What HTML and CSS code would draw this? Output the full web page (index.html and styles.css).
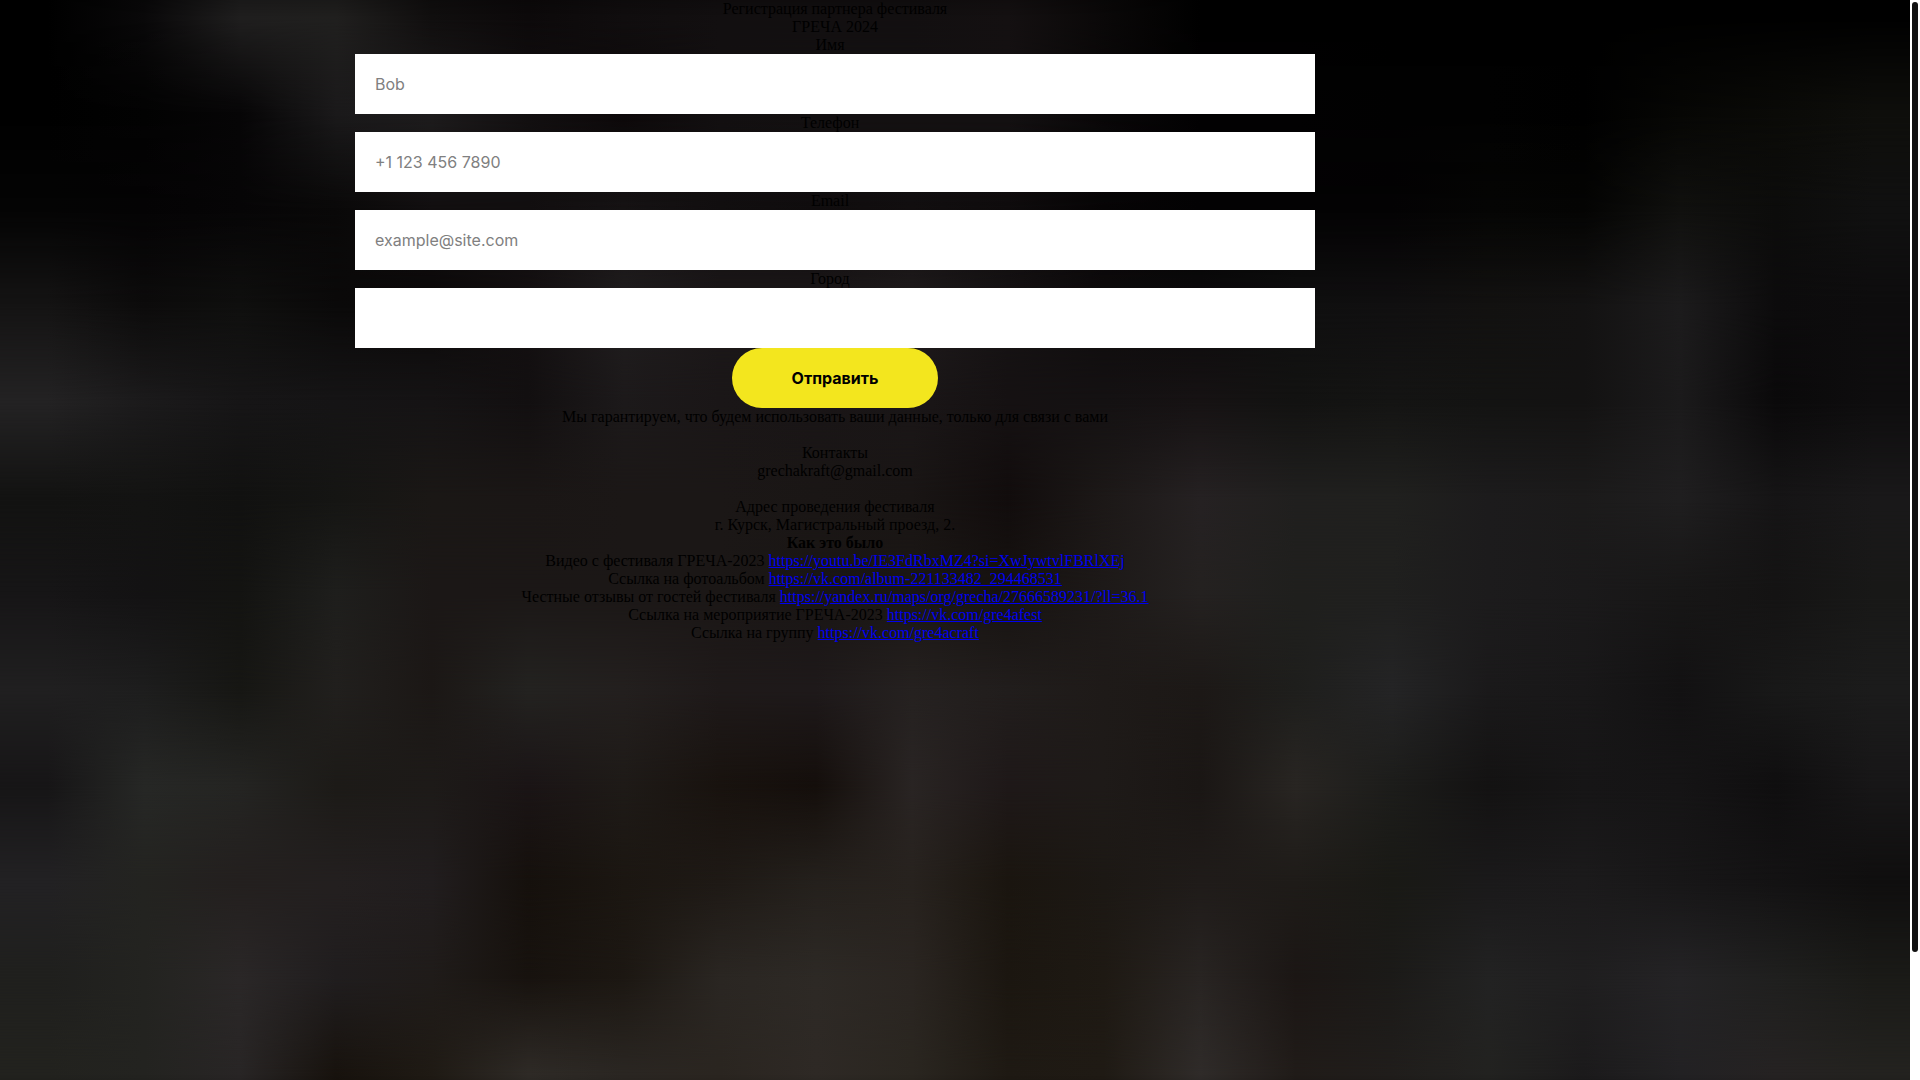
FILE: index.html
```html
<!DOCTYPE html>
<html lang="ru">
<head>
  <meta charset="UTF-8">
  <meta name="viewport" content="width=device-width, initial-scale=1.0">
  <title>Регистрация партнера фестиваля ГРЕЧА 2024</title>
  <link rel="stylesheet" href="styles.css">
</head>
<body>
  <div class="backdrop">
    <div class="band"></div>
    <div class="band"></div>
    <div class="band"></div>
    <div class="band"></div>
    <div class="band"></div>
    <div class="band"></div>
    <div class="band"></div>
    <div class="band"></div>
    <div class="band"></div>
    <div class="band"></div>
    <div class="band"></div>
    <div class="band"></div>
  </div>

  <div class="page">
    <main class="content">
      <h1 class="title">Регистрация партнера фестиваля<br>ГРЕЧА 2024</h1>

      <form class="form">
        <label class="form-label" for="name">Имя</label>
        <input class="form-input" type="text" id="name" name="name" placeholder="Bob">
        <label class="form-label" for="phone">Телефон</label>
        <input class="form-input" type="tel" id="phone" name="phone" placeholder="+1 123 456 7890">
        <label class="form-label" for="email">Email</label>
        <input class="form-input" type="email" id="email" name="email" placeholder="example@site.com">
        <label class="form-label" for="city">Город</label>
        <input class="form-input" type="text" id="city" name="city">
        <button class="form-submit" type="submit">Отправить</button>
      </form>

      <p class="note">Мы гарантируем, что будем использовать ваши данные, только для связи с вами</p>
      <p class="note">Контакты<br>grechakraft@gmail.com</p>
      <p>Адрес проведения фестиваля<br>г. Курск, Магистральный проезд, 2.</p>

      <strong>Как это было</strong>
      <ul class="links">
        <li>Видео с фестиваля ГРЕЧА-2023 <a href="https://youtu.be/IE3FdRbxMZ4?si=XwJywtvlFBRlXEj">https://youtu.be/IE3FdRbxMZ4?si=XwJywtvlFBRlXEj</a></li>
        <li>Ссылка на фотоальбом <a href="https://vk.com/album-221133482_294468531">https://vk.com/album-221133482_294468531</a></li>
        <li>Честные отзывы от гостей фестиваля <a href="https://yandex.ru/maps/org/grecha/27666589231/?ll=36.1">https://yandex.ru/maps/org/grecha/27666589231/?ll=36.1</a></li>
        <li>Ссылка на мероприятие ГРЕЧА-2023 <a href="https://vk.com/gre4afest">https://vk.com/gre4afest</a></li>
        <li>Ссылка на группу <a href="https://vk.com/gre4acraft">https://vk.com/gre4acraft</a></li>
      </ul>
    </main>
    <div class="scrollbar" aria-hidden="true">
      <div class="scrollbar-thumb"></div>
    </div>
  </div>
</body>
</html>
```

FILE: styles.css
```css
* {
  box-sizing: border-box;
}
body {
  margin: 0;
  font-family: "Liberation Serif", "Times New Roman", serif;
  font-size: 16px;
  line-height: 18px;
  color: #000;
  text-rendering: optimizeSpeed;
}

/* soft dark backdrop: overlapping bands that fade into each other */
.backdrop {
  position: absolute;
  inset: 0;
  z-index: -1;
  overflow: hidden;
  background: #000;
  isolation: isolate;
}
.band {
  --step: calc(100vh / 11.25);
  height: calc(var(--step) * 2);
  margin-bottom: calc(var(--step) * -1);
  mix-blend-mode: plus-lighter;
  -webkit-mask-image: linear-gradient(transparent, #000, transparent);
  mask-image: linear-gradient(transparent, #000, transparent);
}
.band:nth-child(1) {
  margin-top: -78px;
  background: linear-gradient(90deg, #000 2.5%, #090809, #1f1e1e, #201f1e, #100e0e, #0c090a, #100d0e, #120f10, #120f10, #120f10, #141011, #0a0808, #000, #000, #000, #000, #000, #000, #000, #000 97.5%);
}
.band:nth-child(2) {
  background: linear-gradient(90deg, #000 2.5%, #020202, #060506, #1a191a, #1d1b1c, #120f10, #0c0809, #120f10, #131011, #131011, #131011, #090708, #020102, #020102, #010101, #010101, #000, #060604, #0a0a07, #0e0e0b 97.5%);
}
.band:nth-child(3) {
  background: linear-gradient(90deg, #040404 2.5%, #040304, #060506, #090808, #110e0f, #110e0f, #151213, #110e0f, #0f0c0d, #110e0f, #0e0b0c, #060405, #030203, #030203, #030203, #050504, #040403, #10100e, #0c0c0b, #101010 97.5%);
}
.band:nth-child(4) {
  background: linear-gradient(90deg, #141313 2.5%, #0c0b0b, #0f0f0e, #0a0909, #0a0808, #130f10, #201d1e, #1b1718, #1b1718, #1f1b1c, #151213, #0e0b0c, #0b0a0b, #0f0f0f, #100f10, #121110, #131212, #1c1b1c, #0c0b0c, #0d0c0d 97.5%);
}
.band:nth-child(5) {
  background: linear-gradient(90deg, #232223 2.5%, #1b1a1b, #161516, #151415, #151314, #120f10, #1c191a, #1a1617, #191516, #1a1617, #151112, #141112, #161213, #121211, #141413, #131312, #131212, #1b1a1b, #0a090a, #0e0d0e 97.5%);
}
.band:nth-child(6) {
  background: linear-gradient(90deg, #121211 2.5%, #131312, #111110, #151513, #1a1715, #1a1615, #1b1716, #1b1716, #1a1615, #191514, #110c0c, #1c1817, #252122, #201f1e, #20201e, #1c1b1c, #1b1a1a, #1f1e1f, #151415, #191819 97.5%);
}
.band:nth-child(7) {
  background: linear-gradient(90deg, #161516 2.5%, #131213, #131311, #1e1e1c, #1b1716, #1b1716, #1b1716, #1b1716, #191514, #1a1614, #161210, #1d1918, #242120, #1f1f1d, #1f1f1e, #1c1b1c, #1a191a, #171616, #141313, #181817 97.5%);
}
.band:nth-child(8) {
  background: linear-gradient(90deg, #201f20 2.5%, #1d1d1d, #161613, #211f1d, #1b1715, #232220, #231f1e, #1e1919, #1e191a, #252120, #211d1c, #1e1a18, #1c1816, #1e1e1c, #242425, #1a191a, #181718, #121112, #181818, #1b1b1b 97.5%);
}
.band:nth-child(9) {
  background: linear-gradient(90deg, #161516 2.5%, #262725, #242422, #1c1a17, #1d1a18, #1a1415, #1e1a17, #18120e, #140e0b, #292423, #1e1818, #1e1a18, #1a1614, #282522, #1c1c1a, #131212, #161516, #151415, #0f0e0f, #171617 97.5%);
}
.band:nth-child(10) {
  background: linear-gradient(90deg, #222123 2.5%, #232320, #231f1e, #231f1f, #211d1e, #15100c, #1b1611, #1e1915, #24201c, #27221e, #1a150f, #1c1814, #1f1b19, #1e1b18, #191915, #1a191a, #1b1a1b, #171617, #131213, #0f0e0e 97.5%);
}
.band:nth-child(11) {
  background: linear-gradient(90deg, #1f1f1d 2.5%, #232320, #2a2727, #201d1e, #1f1b19, #17120e, #1c1712, #2a2622, #2d2925, #2a2521, #1b1610, #1e1913, #282422, #1b1614, #1b1a18, #222222, #1f1e1f, #242325, #1f1f1e, #1a1a17 97.5%);
}
.band:nth-child(12) {
  background: linear-gradient(90deg, #22221e 2.5%, #232320, #282525, #17120d, #1f1a14, #2e2a26, #2a2622, #2a2520, #2e2925, #2a2620, #1e1913, #1f1a14, #2f2b29, #201b18, #201d1b, #222220, #1b1a1b, #222123, #252222, #23221f 97.5%);
}

.page {
  display: flex;
  min-height: 100vh;
}
.content {
  flex: 1;
  padding-right: 240px;
  text-align: center;
}
.scrollbar {
  width: 10px;
  padding: 2px;
  background: #fff;
}
.scrollbar-thumb {
  height: 88vh;
  border-radius: 3px;
  background: #111;
}
.title {
  margin: 0;
  font-size: 16px;
  font-weight: normal;
}
.form {
  max-width: 960px;
  margin: 0 auto;
}
.form-label {
  display: block;
  padding-right: 10px;
}
.form-input {
  display: block;
  width: 100%;
  height: 60px;
  padding: 0 20px;
  border: 0;
  background: #fff;
  font-family: Inter, Arial, sans-serif;
  font-size: 16px;
}
.form-input::placeholder {
  color: #808080;
}
.form-submit {
  height: 60px;
  display: block;
  margin: 0 auto;
  padding: 0 60px;
  border: 0;
  border-radius: 30px;
  background: #f3e61e;
  color: #000;
  font-family: Inter, Arial, sans-serif;
  font-size: 16px;
  font-weight: 700;
  text-rendering: inherit;
}
p {
  margin: 0;
}
.note {
  margin-bottom: 18px;
}
.links {
  margin: 0;
  padding: 0;
  list-style: none;
}
.links a {
  color: #00e;
}
```
